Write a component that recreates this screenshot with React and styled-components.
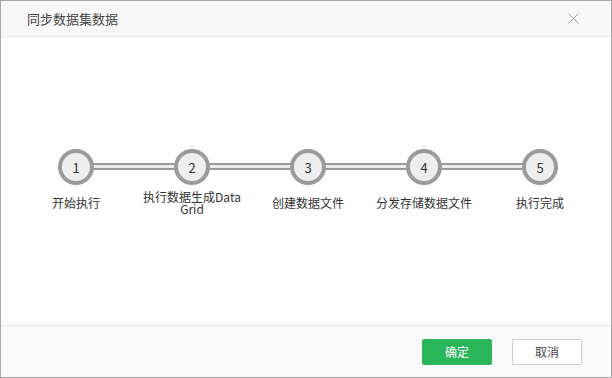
import React from 'react'
import styled, { createGlobalStyle } from 'styled-components'

const steps = ['开始执行', '执行数据生成Data Grid', '创建数据文件', '分发存储数据文件', '执行完成']

const App = () => {
  return (
    <>
    <GlobalStyle />
    <Dialog>
      <Header>
        <Title>同步数据集数据</Title>
        <Close>
          <svg width="11" height="11" viewBox="0 0 11 11">
            <path d="M0.5 0.5 L10.5 10.5 M10.5 0.5 L0.5 10.5" stroke="#9a9a9a" strokeWidth="1" fill="none" />
          </svg>
        </Close>
      </Header>
      <Body>
        <Track>
          {steps.map((s, i) => (
            <React.Fragment key={s}>
              <Circle>{i + 1}</Circle>
              {i < steps.length - 1 && <Line />}
            </React.Fragment>
          ))}
        </Track>
        <Labels>
          {steps.map((s) => (
            <Label key={s}>{s}</Label>
          ))}
        </Labels>
      </Body>
      <Footer>
        <Button primary>确定</Button>
        <Button>取消</Button>
      </Footer>
    </Dialog>
    </>
  )
}

export default App

const GlobalStyle = createGlobalStyle`
  body {
    margin: 0;
    background: #fff;
    font-family: "Noto Sans CJK SC", "Noto Sans", sans-serif;
  }
`
const Dialog = styled.div`
  width: 612px;
  height: 378px;
  box-sizing: border-box;
  border: 1px solid #a8a8a8;
  display: flex;
  flex-direction: column;
  background: #fff;
`
const Header = styled.div`
  display: flex;
  align-items: center;
  justify-content: space-between;
  height: 35px;
  padding: 0 32px 0 26px;
  background: #f8f8f8;
  border-bottom: 1px solid #e6e6e6;
`
const Title = styled.div`
  font-size: 13px;
  color: #444;
`
const Close = styled.div`
  display: flex;
  align-items: center;
  height: 11px;
`
const Body = styled.div`
  height: 288px;
  box-sizing: border-box;
  padding-top: 112px;
  padding-left: 17px;
`
const Track = styled.div`
  display: flex;
  align-items: center;
  padding-left: 40px;
`
const Circle = styled.div`
  width: 36px;
  height: 36px;
  box-sizing: border-box;
  border: 4px solid #9b9b9b;
  border-radius: 50%;
  background: #eeeeee;
  display: flex;
  align-items: center;
  justify-content: center;
  font-size: 13px;
  color: #333;
  position: relative;
  z-index: 1;
`
const Line = styled.div`
  width: 84px;
  height: 7px;
  margin: -2px -2px 0;
  box-sizing: border-box;
  border-top: 2px solid #9b9b9b;
  border-bottom: 2px solid #9b9b9b;
  background: #ececec;
`
const Labels = styled.div`
  display: grid;
  grid-template-columns: repeat(5, 116px);
  align-items: center;
  height: 24px;
  margin-top: 6px;
`
const Label = styled.div`
  justify-self: center;
  max-width: 108px;
  text-align: center;
  font-size: 12px;
  line-height: 12px;
  color: #333;
`
const Footer = styled.div`
  flex: 1;
  display: flex;
  align-items: center;
  justify-content: flex-end;
  gap: 20px;
  padding-right: 29px;
  background: #fafafa;
  border-top: 1px solid #e6e6e6;
`
const Button = styled.div`
  width: 70px;
  height: 26px;
  box-sizing: border-box;
  display: flex;
  align-items: center;
  justify-content: center;
  font-size: 12px;
  border-radius: 2px;
  color: ${(p) => (p.primary ? '#fff' : '#444')};
  background: ${(p) => (p.primary ? '#2bb55a' : '#fff')};
  border: 1px solid ${(p) => (p.primary ? '#2bb55a' : '#cccccc')};
`
